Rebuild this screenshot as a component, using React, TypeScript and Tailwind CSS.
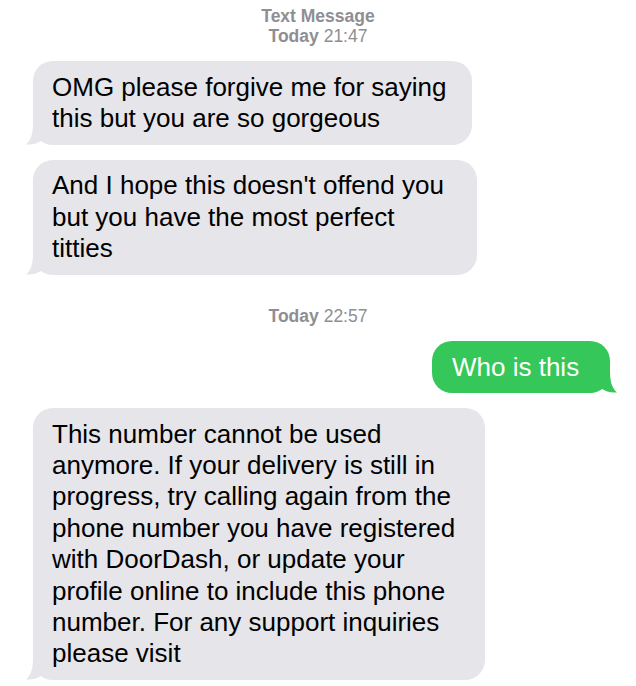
import React from "react";

const font = { fontFamily: '"Liberation Sans", Arial, sans-serif' };

const TailLeft = () => (
  <svg
    className="absolute bottom-0 left-[-7px]"
    width="22"
    height="22"
    viewBox="0 0 22 22"
  >
    <path d="M7 0 C7 11 5 17 0 21.5 C7 22 13 20 17 16 L17 0 Z" fill="#e5e5ea" />
  </svg>
);

const TailRight = () => (
  <svg
    className="absolute bottom-0 right-[-7px]"
    width="22"
    height="22"
    viewBox="0 0 22 22"
  >
    <path d="M15 0 C15 11 17 17 22 21.5 C15 22 9 20 5 16 L5 0 Z" fill="#35c759" />
  </svg>
);

const Incoming = ({ lines, width }: { lines: string[]; width: string }) => (
  <div className={`relative ml-[33px] ${width}`}>
    <div className="rounded-[20px] bg-[#e5e5ea] pl-[19px] py-[10.5px] text-[26px] leading-[31.4px] text-black">
      {lines.map((l) => (
        <div key={l} className="whitespace-nowrap">
          {l}
        </div>
      ))}
    </div>
    <TailLeft />
  </div>
);

const Stamp = ({ label, time }: { label: string; time: string }) => (
  <div className="text-center text-[17.5px] leading-[20px] text-[#8e8e93]">
    <span className="font-bold">{label}</span> {time}
  </div>
);

export default function App() {
  return (
    <div className="w-[636px] h-[686px] bg-white overflow-hidden pt-[6px]" style={font}>
      <div className="text-center text-[17.5px] leading-[20px] text-[#8e8e93] font-bold">
        Text Message
      </div>
      <Stamp label="Today" time="21:47" />

      <div className="mt-[15px] flex flex-col gap-[15px]">
        <Incoming
          width="w-[439px]"
          lines={["OMG please forgive me for saying", "this but you are so gorgeous"]}
        />
        <Incoming
          width="w-[444px]"
          lines={[
            "And I hope this doesn't offend you",
            "but you have the most perfect",
            "titties",
          ]}
        />
      </div>

      <div className="mt-[31px]">
        <Stamp label="Today" time="22:57" />
      </div>

      <div className="mt-[15px] flex justify-end pr-[26px]">
        <div className="relative w-[178px]">
          <div className="rounded-[20px] bg-[#35c759] h-[52px] pl-[20px] flex items-center text-[26px] text-white">
            Who is this
          </div>
          <TailRight />
        </div>
      </div>

      <div className="mt-[15px]">
        <Incoming
          width="w-[452px]"
          lines={[
            "This number cannot be used",
            "anymore. If your delivery is still in",
            "progress, try calling again from the",
            "phone number you have registered",
            "with DoorDash, or update your",
            "profile online to include this phone",
            "number. For any support inquiries",
            "please visit",
          ]}
        />
      </div>
    </div>
  );
}
